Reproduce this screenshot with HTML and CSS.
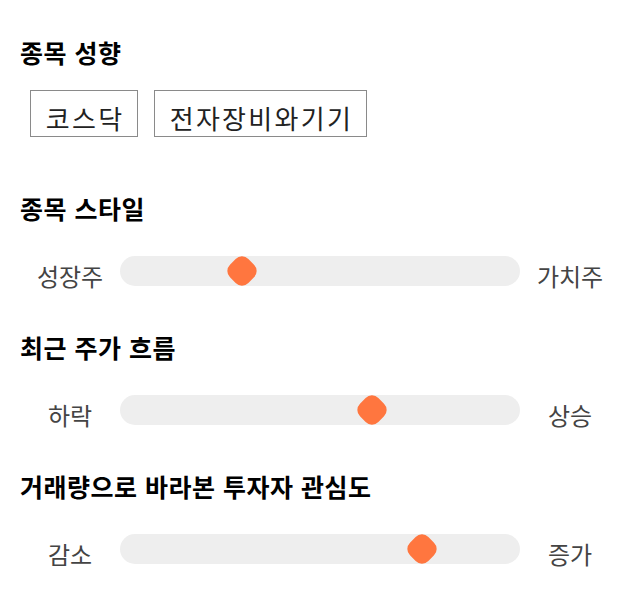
FILE: index.html
```html
<!DOCTYPE html>
<html lang="ko">
<head>
<meta charset="utf-8">
<link rel="stylesheet" href="styles.css">
</head>
<body>
<main class="page">
  <section class="section section-tags">
    <h2 class="title">종목 성향</h2>
    <div class="tags">
      <span class="tag">코스닥</span>
      <span class="tag">전자장비와기기</span>
    </div>
  </section>
  <section class="section section-first-slider">
    <h2 class="title">종목 스타일</h2>
    <div class="slider-row">
      <span class="label">성장주</span>
      <div class="track"><span class="thumb" style="left: 30.4%"></span></div>
      <span class="label">가치주</span>
    </div>
  </section>
  <section class="section section-slider">
    <h2 class="title">최근 주가 흐름</h2>
    <div class="slider-row">
      <span class="label">하락</span>
      <div class="track"><span class="thumb" style="left: 63.1%"></span></div>
      <span class="label">상승</span>
    </div>
  </section>
  <section class="section section-slider">
    <h2 class="title">거래량으로 바라본 투자자 관심도</h2>
    <div class="slider-row">
      <span class="label">감소</span>
      <div class="track"><span class="thumb" style="left: 75.6%"></span></div>
      <span class="label">증가</span>
    </div>
  </section>
</main>
</body>
</html>
```
FILE: styles.css
```css
* { box-sizing: border-box; }
html, body { margin: 0; padding: 0; background: #ffffff; }
body {
  font-family: "Noto Sans CJK KR", "Noto Sans", sans-serif;
  color: #111;
}
.page {
  padding: 37px 20px 20px 20px;
  display: flex;
  flex-direction: column;
}
.title {
  margin: 0;
  font-size: 25px;
  font-weight: 700;
  letter-spacing: 0.5px;
  line-height: 30px;
  color: #000;
}
.tags {
  display: flex;
  gap: 16px;
  margin-top: 23px;
  padding-left: 10px;
}
.tag {
  display: block;
  height: 47px;
  line-height: 38px;
  padding: 8px 12.5px 0 14.75px;
  border: 1px solid #8a8a8a;
  font-size: 26px;
  letter-spacing: 2.3px;
  color: #222;
}
.section-first-slider { margin-top: 56px; }
.section-slider { margin-top: 41px; }
.slider-row {
  display: flex;
  align-items: flex-start;
  margin-top: 33px;
}
.label {
  width: 100px;
  padding-top: 5px;
  text-align: center;
  font-size: 24px;
  color: #444;
  line-height: 30px;
}
.track {
  position: relative;
  flex: 1;
  height: 30px;
  background: #eeeeee;
  border-radius: 15px;
}
.thumb {
  position: absolute;
  top: 50%;
  width: 26px;
  height: 26px;
  background: #ff763f;
  border-radius: 9px;
  transform: translate(-50%, -50%) rotate(45deg);
}
```
